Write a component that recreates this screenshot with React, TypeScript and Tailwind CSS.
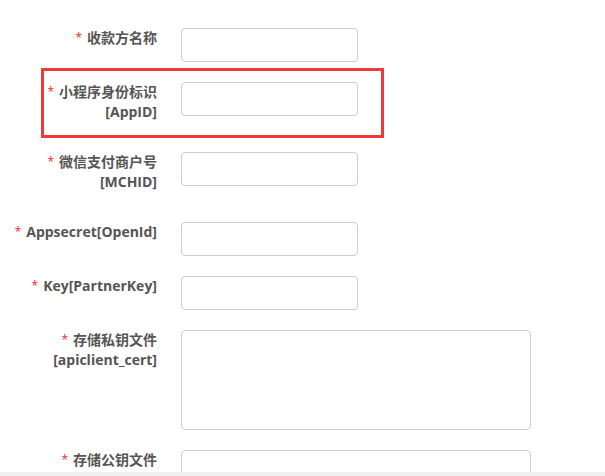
import React from "react";

interface Field {
  label: string;
  sub?: string;
  multiline?: boolean;
}

const fields: Field[] = [
  { label: "收款方名称" },
  { label: "小程序身份标识", sub: "[AppID]" },
  { label: "微信支付商户号", sub: "[MCHID]" },
  { label: "Appsecret[OpenId]" },
  { label: "Key[PartnerKey]" },
  { label: "存储私钥文件", sub: "[apiclient_cert]", multiline: true },
  { label: "存储公钥文件", multiline: true },
];

function FormRow({ field }: { field: Field }) {
  return (
    <div className="flex items-start gap-[24px] mb-[20px]">
      <label
        className={`w-[157px] shrink-0 text-right text-[14px] leading-[20px] font-bold text-[#555] ${
          field.sub ? "pb-[10px]" : ""
        }`}
      >
        <span className="text-[#f22] text-[12px] font-normal mr-[5px] align-top">*</span>
        {field.label}
        {field.sub && (
          <>
            <br />
            {field.sub}
          </>
        )}
      </label>
      {field.multiline ? (
        <textarea className="w-[350px] h-[100px] border border-[#ccc] rounded-[4px] bg-white resize-none outline-none" />
      ) : (
        <input
          type="text"
          className="w-[177px] h-[34px] border border-[#ccc] rounded-[4px] bg-white outline-none"
        />
      )}
    </div>
  );
}

export default function App() {
  return (
    <div
      className="relative flex flex-col w-[605px] h-[476px] bg-white overflow-hidden"
      style={{ fontFamily: '"Open Sans", "Noto Sans CJK SC", sans-serif' }}
    >
      <div className="flex-1 overflow-hidden pt-[28px]">
        {fields.map((f) => (
          <FormRow key={f.label} field={f} />
        ))}
      </div>
      <div className="h-[4px] bg-[#f0f0f0] shrink-0" />

      {/* annotation box */}
      <div className="absolute left-[41px] top-[68px] w-[343px] h-[70px] border-[3px] border-[#f03a3a] pointer-events-none" />
    </div>
  );
}
